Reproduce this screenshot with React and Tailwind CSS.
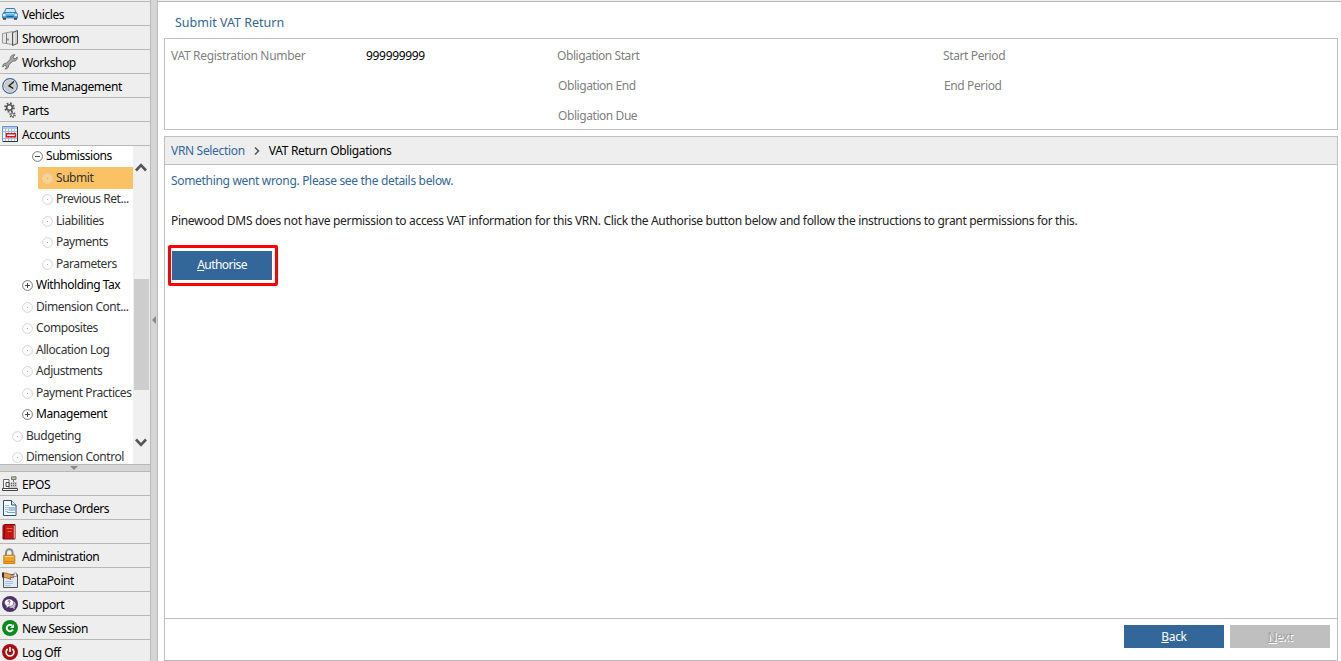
import React, { useState } from "react";

const CarIcon = () => (
  <svg viewBox="0 0 16 16" className="h-4 w-4">
    <path d="M4 2.500h8.500l1.500 4.200H2.300z" fill="#cfeafa" stroke="#3a7fae" />
    <path d="M1.500 6.500h13l1.200 2v3.500H.3V8.500z" fill="#4aa9e4" stroke="#2a6e9e" strokeWidth=".7" />
    <path d="M4 7.700h8" stroke="#a9dbf7" strokeWidth="1.200" />
    <path d="M1 8.900h2.500M12.500 8.900H15" stroke="#fff" strokeWidth="1.500" />
    <path d="M4.500 10.500h7" stroke="#1d5f91" />
    <path d="M1 12h3v1.800H1zM12 12h3v1.800h-3z" fill="#444" />
  </svg>
);

const ShowroomIcon = () => (
  <svg viewBox="0 0 16 16" className="h-4 w-4">
    <path d="M.5 3.500 11 1.500v13L.5 13z" fill="#e6e6e6" stroke="#999" />
    <path d="M4.500 3.200v10.300" stroke="#777" />
    <path d="M6 8.500v2" stroke="#444" />
    <path d="M10.500 2.500l5-2v13l-5 2z" fill="#d0d0d0" stroke="#555" />
    <path d="M12.500 3v10.500" stroke="#eee" />
  </svg>
);

const WrenchIcon = () => (
  <svg viewBox="0 0 16 16" className="h-4 w-4">
    <path
      d="M13 .8 11.200 2.800l.3 1.700 1.700.3L15.200 3c.4 2-.8 4-3.200 4-1.200 0-1.600.4-2.200 1L6.600 11c.2 2.300-1.300 4.200-3.600 4.100l1.500-1.800-.3-1.500-1.600-.3L.8 13c-.3-2.400 1.300-4 3.600-3.800L8.200 5.300C8 2.400 10.300.3 13 .8z"
      fill="#a8a8a8"
      stroke="#666"
      strokeWidth=".9"
    />
  </svg>
);

const ClockIcon = () => (
  <svg viewBox="0 0 16 16" className="h-4 w-4">
    <circle cx="8" cy="8" r="7.300" fill="#f3f5f8" stroke="#43658f" strokeWidth="1.200" />
    <circle cx="8" cy="8" r="5.500" fill="#c9cbce" stroke="#b6bcc4" strokeWidth=".8" />
    <path d="M12 3.500 7 7.800l4.300 2.700" fill="none" stroke="#1c1c1c" strokeWidth="1.400" />
  </svg>
);

const GearsIcon = () => (
  <svg viewBox="0 0 16 16" className="h-4 w-4">
    <circle cx="7.500" cy="5.500" r="4.300" fill="none" stroke="#555" strokeWidth="2" strokeDasharray="1.700 1.680" />
    <circle cx="7.500" cy="5.500" r="2.800" fill="#f3f3f3" stroke="#555" strokeWidth="1.600" />
    <circle cx="10.500" cy="12.900" r="2.500" fill="none" stroke="#555" strokeWidth="1.400" strokeDasharray="1.300 1.320" />
    <circle cx="10.500" cy="12.900" r="1.600" fill="#f3f3f3" stroke="#555" />
  </svg>
);

const AccountsIcon = () => (
  <svg viewBox="0 0 16 16" className="h-4 w-4">
    <path d="M.5.5h15v15H.5z" fill="#f3f8fd" stroke="#6e98c9" />
    <path d="M1 1h14v2H1z" fill="#a9c8ea" />
    <path d="M1 5.500h14M1 12.500h14M3.500 3v12M6.500 3v12M9.500 3v12M12.500 3v12" stroke="#9dbde0" />
    <path d="M15.500 1v14.500H1" fill="none" stroke="#333" />
    <path d="M4.500 7.700h9v3h-9z" fill="#fff" stroke="#e0101c" strokeWidth="1.400" />
  </svg>
);

const EposIcon = () => (
  <svg viewBox="0 0 16 16" className="h-4 w-4">
    <path d="M9.500.8h4.500v2.700H9.500z" fill="#a9cf8e" stroke="#777" />
    <path d="M11.500 3.500v2.500" stroke="#777" />
    <path d="M1.500 3.500h5.500v9H1.500z" fill="#fff" stroke="#666" />
    <path d="M4 6.500h3v4H4z" fill="#fff" stroke="#444" />
    <path d="M8.500 6h6.500v6H8.500z" fill="#c9c9c9" />
    <path d="M9 7.500h5M9 9.500h5" stroke="#555" strokeDasharray="1 1" />
    <path d="M.5 12.500h15v2H.5z" fill="#f5f5f5" stroke="#444" />
  </svg>
);

const OrderIcon = () => (
  <svg viewBox="0 0 16 16" className="h-4 w-4">
    <path d="M1.500.5h8l4.500 4.500v10.500H1.500z" fill="#fff" stroke="#24547f" />
    <path d="M9.500.5v4.500H14" fill="#d9e8f5" stroke="#24547f" />
    <path d="M3 5.500h4M3 7.500h4M3 9.500h3M3 11.500h3" stroke="#8fbce5" />
    <path d="M6.500 7H13v4H6.500z" fill="#9cc5e8" />
    <path d="M5 12.500h8" stroke="#6fa5d6" />
  </svg>
);

const BookIcon = () => (
  <svg viewBox="0 0 16 16" className="h-4 w-4">
    <path d="M1 1.500 2.500.5h10.500v14.500H1z" fill="#c91414" stroke="#7d0c0c" />
    <path d="M2.500 1.500v13" stroke="#8e0c0c" />
    <path d="M12.300 1.500v13" stroke="#eee" strokeWidth=".8" />
    <path d="M4.500 4.500h6M5.500 7.500h4" stroke="#ef7a3a" strokeWidth=".8" />
  </svg>
);

const LockIcon = () => (
  <svg viewBox="0 0 16 16" className="h-4 w-4">
    <path d="M4 8V4.500a3.300 3.300 0 0 1 6.600 0V8" fill="none" stroke="#858585" strokeWidth="1.900" />
    <path d="M1.800 7.300h11v8.200h-11z" fill="#f3a321" stroke="#b96e0c" strokeWidth=".8" />
    <path d="M2.500 8.500h9.500" stroke="#ffd77c" />
    <path d="M2.500 13.500h9.500" stroke="#d17f10" />
  </svg>
);

const DataPointIcon = () => (
  <svg viewBox="0 0 16 16" className="h-4 w-4">
    <path d="M1.500 2.500h14v13h-14z" fill="#dfeaf6" stroke="#555" />
    <path d="M3 9.500h8M3 11.500h8M3 13.500h6" stroke="#a9c4df" />
    <path d="M1 1h3l5 1.500L12 5l-1 1-3-1 1 2.500L5 6 3 5.500H1z" fill="#e9a45c" stroke="#7d5229" strokeWidth=".7" />
    <path d="M0 .5h2v5H0z" fill="#333" />
    <path d="M12 1h2.500v3.500H12z" fill="#f5f5f5" stroke="#777" strokeWidth=".7" />
  </svg>
);

const SupportIcon = () => (
  <svg viewBox="0 0 16 16" className="h-4 w-4">
    <circle cx="8" cy="8" r="8" fill="#4b3168" />
    <path d="M11.500 5c3 1.500 2.500 5 1 6.200l.4 2-2.500-1.300c-1.500.2-2.700-.2-3.400-1z" fill="#c4b9d2" />
    <path d="M7 3c2.700 0 4.700 1.600 4.700 3.800S9.700 10.500 7 10.500l-2.800 1.700.3-2.300C1.200 8 2 3 7 3z" fill="#fff" stroke="#4b3168" strokeWidth=".5" />
    <path d="M5.800 5.600c.2-1.200 2.600-1 2.300.3-.2.700-1 .7-1 1.600M7.100 8.300v.9" fill="none" stroke="#4b3168" />
  </svg>
);

const NewSessionIcon = () => (
  <svg viewBox="0 0 16 16" className="h-4 w-4">
    <circle cx="8" cy="8" r="8" fill="#0c8a1c" />
    <path d="M10.800 9.500A3.200 3.200 0 1 1 10 5.600" fill="none" stroke="#fff" strokeWidth="1.900" />
    <path d="M12 4v4H8z" fill="#fff" />
  </svg>
);

const LogOffIcon = () => (
  <svg viewBox="0 0 16 16" className="h-4 w-4">
    <circle cx="8" cy="8" r="8" fill="#a90d10" />
    <path d="M5.600 5a3.900 3.900 0 1 0 4.800 0" fill="none" stroke="#fff" strokeWidth="1.600" />
    <path d="M8 3v5" stroke="#fff" strokeWidth="1.600" />
  </svg>
);

const topModules = [
  { label: "Vehicles", icon: CarIcon },
  { label: "Showroom", icon: ShowroomIcon },
  { label: "Workshop", icon: WrenchIcon },
  { label: "Time Management", icon: ClockIcon },
  { label: "Parts", icon: GearsIcon },
  { label: "Accounts", icon: AccountsIcon },
];

const bottomModules = [
  { label: "EPOS", icon: EposIcon },
  { label: "Purchase Orders", icon: OrderIcon },
  { label: "edition", icon: BookIcon },
  { label: "Administration", icon: LockIcon },
  { label: "DataPoint", icon: DataPointIcon },
  { label: "Support", icon: SupportIcon },
  { label: "New Session", icon: NewSessionIcon },
  { label: "Log Off", icon: LogOffIcon },
];

const treeItems = [
  { label: "Submissions", indent: "ml-[28px]", type: "open" },
  { label: "Submit", indent: "ml-[38px]", type: "leaf" },
  { label: "Previous Ret...", indent: "ml-[38px]", type: "leaf" },
  { label: "Liabilities", indent: "ml-[38px]", type: "leaf" },
  { label: "Payments", indent: "ml-[38px]", type: "leaf" },
  { label: "Parameters", indent: "ml-[38px]", type: "leaf" },
  { label: "Withholding Tax", indent: "ml-[18px]", type: "closed" },
  { label: "Dimension Cont...", indent: "ml-[18px]", type: "leaf" },
  { label: "Composites", indent: "ml-[18px]", type: "leaf" },
  { label: "Allocation Log", indent: "ml-[18px]", type: "leaf" },
  { label: "Adjustments", indent: "ml-[18px]", type: "leaf" },
  { label: "Payment Practices", indent: "ml-[18px]", type: "leaf" },
  { label: "Management", indent: "ml-[18px]", type: "closed" },
  { label: "Budgeting", indent: "ml-[8px]", type: "leaf" },
  { label: "Dimension Control", indent: "ml-[8px]", type: "leaf" },
];

const TreeMarker = ({ type }) => (
  <svg viewBox="0 0 11 11" className="mt-px mr-[3px] h-[11px] w-[11px] shrink-0">
    <circle cx="5.500" cy="5.500" r="4.900" fill="#fff" fillOpacity=".25" stroke={type === "leaf" ? "#d4d4d4" : "#777"} />
    {type === "leaf" && <path d="M5 5h1v1H5z" fill="#aaa" />}
    {type !== "leaf" && <path d="M3 5.500h5" stroke="#444" />}
    {type === "closed" && <path d="M5.500 3v5" stroke="#444" />}
  </svg>
);

const ModuleButton = ({ label, icon: Icon }) => (
  <div className="flex h-6 shrink-0 items-center border-b border-[#b8b8b8] bg-[#eee] pt-px pl-[2px] text-black">
    <Icon />
    <span className="ml-1 pt-[2px]">{label}</span>
  </div>
);

const Chevron = ({ up }) => (
  <svg viewBox="0 0 12 9" className="mr-px h-[9px] w-3">
    <path d={up ? "M1 7.500 6 2.200l5 5.300" : "M1 1.500l5 5.300 5-5.300"} fill="none" stroke="#555" strokeWidth="2.600" />
  </svg>
);

const App = () => {
  const [selected, setSelected] = useState("Submit");

  return (
    <div className="flex h-[661px] w-[1341px] overflow-hidden bg-white font-['Noto_Sans',sans-serif] text-[12px] leading-4 tracking-[-0.32px] whitespace-nowrap text-[#333]">
      {/* Sidebar */}
      <div className="flex w-[150px] shrink-0 flex-col overflow-hidden bg-[#eee] tracking-[-0.45px]">
        <div className="h-[2px] shrink-0 border-b border-[#b8b8b8]" />
        {topModules.map((item) => (
          <ModuleButton key={item.label} {...item} />
        ))}
        <div className="flex h-[318px] shrink-0 overflow-hidden bg-[#f0f0f0]">
          <div className="w-[133px] overflow-hidden bg-white">
            <div className="-mt-[0.5px]">
              {treeItems.map((item) => (
                <div
                  key={item.label}
                  onClick={() => setSelected(item.label)}
                  className={`flex h-[21.5px] items-center pl-1 ${item.indent} ${
                    selected === item.label ? "bg-[#fac264]" : ""
                  } ${item.type === "leaf" ? "text-[#333]" : "text-black"}`}
                >
                  <TreeMarker type={item.type} />
                  <span>{item.label}</span>
                </div>
              ))}
            </div>
          </div>
          <div className="flex w-[17px] flex-col items-center">
            <div className="flex h-[133px] pt-[17px]">
              <Chevron up />
            </div>
            <div className="h-[111px] w-[15px] bg-[#cdcdcd]" />
            <div className="flex flex-1 items-end pb-[17px]">
              <Chevron />
            </div>
          </div>
        </div>
        <div className="flex h-2 shrink-0 justify-center border-y border-[#b8b8b8] bg-[#d6d6d6]">
          <svg viewBox="0 0 8 4" className="mt-px mr-[2px] h-1 w-2">
            <path d="M0 0h8L4 4z" fill="#888" />
          </svg>
        </div>
        {bottomModules.map((item) => (
          <ModuleButton key={item.label} {...item} />
        ))}
      </div>

      {/* Splitter */}
      <div className="flex w-2 shrink-0 items-center border-x border-[#b8b8b8] bg-[#d6d6d6]">
        <svg viewBox="0 0 4 8" className="mt-[-21px] ml-px h-2 w-1">
          <path d="M4 0v8L0 4z" fill="#888" />
        </svg>
      </div>

      {/* Content */}
      <div className="flex flex-1 flex-col">
        <div className="h-[2px] border-b border-[#b8b8b8] bg-[#eee]" />
        <div className="h-9 pt-[13px] pl-[17px] text-[12.500px] tracking-[0px] text-[#336699]">Submit VAT Return</div>

        <div className="mr-[3px] ml-[6px] flex h-[92px] border border-[#bfbfbf] pt-[9px] pl-[6px] text-[#808080]">
          <div className="w-[195px]">VAT Registration Number</div>
          <div className="w-[191px] text-black">999999999</div>
          <div className="flex w-[386px] flex-col gap-[14px] tracking-[-0.43px]">
            <div>Obligation Start</div>
            <div className="pl-px">Obligation End</div>
            <div className="pl-px">Obligation Due</div>
          </div>
          <div className="flex flex-col gap-[14px] tracking-[-0.38px]">
            <div>Start Period</div>
            <div className="pl-px">End Period</div>
          </div>
        </div>

        <div className="mt-[6px] mr-[3px] ml-[6px] flex h-[525px] flex-col border border-[#bfbfbf]">
          <div className="flex h-7 items-center border-b border-[#bfbfbf] bg-[#eee] pl-[6px]">
            <span className="text-[#336699]">VRN Selection</span>
            <svg viewBox="0 0 6 8" className="mr-[9px] ml-[9px] h-2 w-[6px]">
              <path d="M1 .5 4.500 4 1 7.500" fill="none" stroke="#555" strokeWidth="1.500" />
            </svg>
            <span className="text-black">VAT Return Obligations</span>
          </div>
          <div className="flex-1 pt-2 pl-[6px]">
            <div className="text-[#336699]">Something went wrong. Please see the details below.</div>
            <div className="mt-6 text-[#222]">
              Pinewood DMS does not have permission to access VAT information for this VRN. Click the Authorise button below and follow the instructions to grant permissions for this.
            </div>
            <div className="mt-4 -ml-[3px] h-[41px] w-[110px] rounded-[2px] border-[3px] border-[#fe0000] pt-[3px] pl-px">
              <button className="block h-[29px] w-[100px] bg-[#336699] pb-[2px] tracking-[-0.55px] text-white">
                <span className="underline">A</span>uthorise
              </button>
            </div>
          </div>
          <div className="flex h-[42px] justify-end gap-[6px] border-t border-[#bfbfbf] pt-[6px] pr-[7px]">
            <button className="h-[23px] w-[100px] bg-[#336699] text-white">
              <span className="underline">B</span>ack
            </button>
            <button disabled className="h-[23px] w-[100px] bg-[#bfbfbf] text-[#a0a0a0] [text-shadow:1px_1px_0_#fff]">
              <span className="underline">N</span>ext
            </button>
          </div>
        </div>
      </div>
    </div>
  );
};

export default App;
